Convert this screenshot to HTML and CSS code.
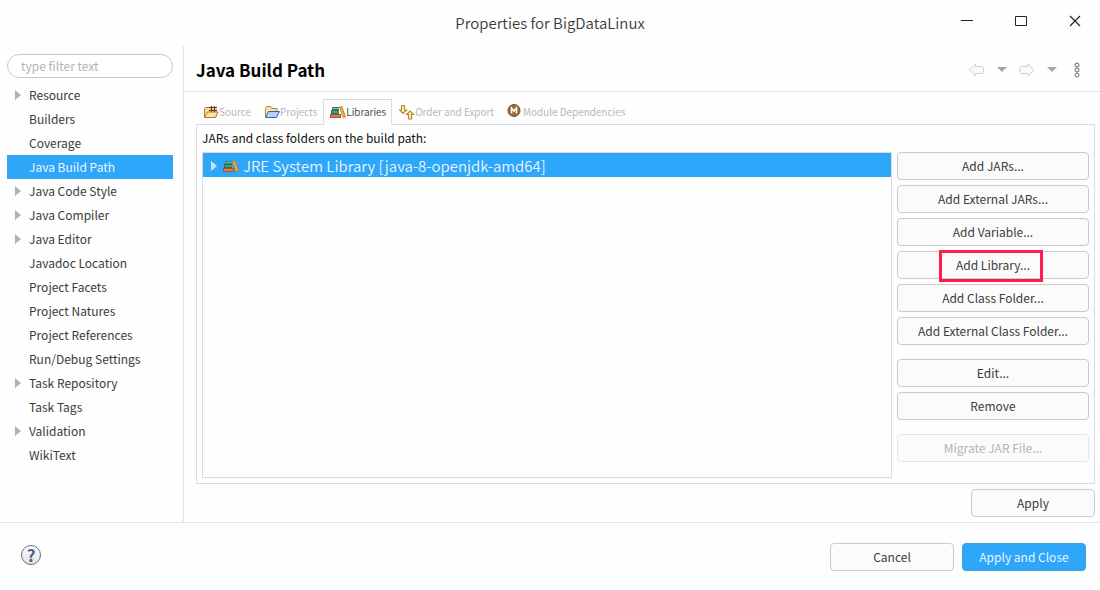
FILE: index.html
```html
<!DOCTYPE html>
<html lang="en">
<head>
  <meta charset="UTF-8">
  <meta name="viewport" content="width=device-width, initial-scale=1.0">
  <title>Properties for BigDataLinux</title>
  <link rel="stylesheet" href="styles.css">
</head>
<body>
<svg class="defs" aria-hidden="true">
  <symbol id="books" viewBox="0 0 16 16">
    <path d="M2 3h7v3H2z" fill="#2f7f78"/>
    <path d="M3 4h6v1H3z" fill="#7cc0a0"/>
    <path d="M1 6h8v4H1z" fill="#2a6a70"/>
    <path d="M2 7h7v2H2z" fill="#46a06a"/>
    <path d="M0 10h11v4H0z" fill="#a8532a"/>
    <path d="M1 11h9v2H1z" fill="#d58149"/>
    <path d="M9 3l3-1 4 11-3 1z" fill="#c07526"/>
    <path d="M10 3.500l1.500-.5 3.500 9.500-1.500.500z" fill="#f6b445"/>
  </symbol>
</svg>

<header class="titlebar">
  <h1>Properties for BigDataLinux</h1>
  <div class="window-controls">
    <button type="button" aria-label="Minimize"><svg width="14" height="14" viewBox="0 0 14 14"><path d="M1 6.500h12" stroke="#222"/></svg></button>
    <button type="button" aria-label="Maximize"><svg width="14" height="14" viewBox="0 0 14 14"><path d="M1.500 2.500h11v9h-11z" fill="none" stroke="#222"/></svg></button>
    <button type="button" aria-label="Close"><svg width="14" height="14" viewBox="0 0 14 14"><path d="M2 2l10 10M12 2L2 12" stroke="#222" stroke-width="1.200"/></svg></button>
  </div>
</header>

<main class="content">
  <nav class="sidebar">
    <input type="text" class="filter" placeholder="type filter text" aria-label="Filter">
    <ul class="tree">
      <li class="parent"><a href="#">Resource</a></li>
      <li><a href="#">Builders</a></li>
      <li><a href="#">Coverage</a></li>
      <li class="selected"><a href="#">Java Build Path</a></li>
      <li class="parent"><a href="#">Java Code Style</a></li>
      <li class="parent"><a href="#">Java Compiler</a></li>
      <li class="parent"><a href="#">Java Editor</a></li>
      <li><a href="#">Javadoc Location</a></li>
      <li><a href="#">Project Facets</a></li>
      <li><a href="#">Project Natures</a></li>
      <li><a href="#">Project References</a></li>
      <li><a href="#">Run/Debug Settings</a></li>
      <li class="parent"><a href="#">Task Repository</a></li>
      <li><a href="#">Task Tags</a></li>
      <li class="parent"><a href="#">Validation</a></li>
      <li><a href="#">WikiText</a></li>
    </ul>
  </nav>

  <section class="page">
    <div class="page-header">
      <h2>Java Build Path</h2>
      <div class="toolbar">
        <button type="button" aria-label="Back"><svg width="16" height="14" viewBox="0 0 16 14"><path d="M.5 7L6.500 1v2.500h7l1 1v5l-1 1h-7V13z" fill="#fafafa" stroke="#cfcfcf"/></svg></button>
        <button type="button" aria-label="Back history"><svg width="10" height="6" viewBox="0 0 10 6"><path d="M0 0h10L5 5z" fill="#a6a6ae"/></svg></button>
        <button type="button" aria-label="Forward"><svg width="16" height="14" viewBox="0 0 16 14"><path d="M15 7L9 1v2.500H2l-1 1v5l1 1h7V13z" fill="#fafafa" stroke="#cfcfcf"/></svg></button>
        <button type="button" aria-label="Forward history"><svg width="10" height="6" viewBox="0 0 10 6"><path d="M0 0h10L5 5z" fill="#a6a6ae"/></svg></button>
        <button type="button" class="menu" aria-label="Menu"><svg width="6" height="16" viewBox="0 0 6 16"><g fill="none" stroke="#666"><circle cx="3" cy="3" r="2"/><circle cx="3" cy="8" r="2"/><circle cx="3" cy="13" r="2"/></g></svg></button>
      </div>
    </div>

    <div class="page-body">
      <div class="tabs" role="tablist">
        <button type="button" role="tab" class="tab">
          <svg width="16" height="16" viewBox="0 0 16 16"><path d="M1.500 13V4.500l1-1h4l1 1H13V13z" fill="#f7dc9a" stroke="#b07b30"/><path d="M6.500 2.500h7v6h-7z" fill="#e9c69b"/><path d="M8.500 2v6M11.500 2v6M6 3.500h8M6 6.500h8" fill="none" stroke="#5f3d26"/><path d="M1.500 13.500l3-5.500h10.500l-2.500 5.500z" fill="#fbe3a6" stroke="#b07b30"/></svg>Source</button>
        <button type="button" role="tab" class="tab">
          <svg width="16" height="16" viewBox="0 0 16 16"><path d="M1.500 13V4.500l1-2h4l1 2h5.500V8" fill="#f9e5a8" stroke="#b0883a"/><path d="M1.500 13.500l3-6h11l-3 6z" fill="#b6d3f7" stroke="#3c5fae"/></svg>Projects</button>
        <button type="button" role="tab" class="tab active" aria-selected="true">
          <svg width="16" height="16"><use href="#books"/></svg>Libraries</button>
        <button type="button" role="tab" class="tab">
          <svg width="16" height="16" viewBox="0 0 16 16"><g fill="#fff3c4" stroke="#b8862b" stroke-width="1.200"><path d="M2.500 1.500h3V6h2L4 9.500.500 6h2z"/><path d="M9.500 15h3v-4.500h2L11 7l-3.500 3.500h2z"/></g></svg>Order and Export</button>
        <button type="button" role="tab" class="tab">
          <svg width="16" height="16" viewBox="0 0 16 16"><circle cx="7" cy="6.500" r="6" fill="#9a6c3c" stroke="#744a24"/><path d="M4.500 9.500V4L7 7l2.500-3v5.500" fill="none" stroke="#fff" stroke-width="1.500"/></svg>Module Dependencies</button>
      </div>

      <div class="panel">
        <p class="caption">JARs and class folders on the build path:</p>
        <div class="columns">
          <ul class="entries">
            <li><svg width="16" height="16"><use href="#books"/></svg>JRE System Library [java-8-openjdk-amd64]</li>
          </ul>
          <div class="actions">
            <button type="button" class="btn">Add JARs...</button>
            <button type="button" class="btn">Add External JARs...</button>
            <button type="button" class="btn">Add Variable...</button>
            <button type="button" class="btn marked">Add Library...</button>
            <button type="button" class="btn">Add Class Folder...</button>
            <button type="button" class="btn">Add External Class Folder...</button>
            <button type="button" class="btn group">Edit...</button>
            <button type="button" class="btn">Remove</button>
            <button type="button" class="btn group" disabled>Migrate JAR File...</button>
          </div>
        </div>
      </div>

      <div class="apply-row">
        <button type="button" class="btn wide">Apply</button>
      </div>
    </div>
  </section>
</main>

<footer class="footer">
  <button type="button" class="help" aria-label="Help">?</button>
  <div class="footer-buttons">
    <button type="button" class="btn wide">Cancel</button>
    <button type="button" class="btn wide primary">Apply and Close</button>
  </div>
</footer>
</body>
</html>
```

FILE: styles.css
```css
*,
*::before,
*::after {
  margin: 0;
  padding: 0;
  box-sizing: border-box;
}

body {
  min-height: 100vh;
  display: flex;
  flex-direction: column;
  font-family: "Noto Sans CJK SC", "Noto Sans", sans-serif;
  font-size: 12px;
  line-height: 20px;
  color: #3b3b3b;
  background: #fefefe;
}

button {
  font: inherit;
  color: inherit;
  background: none;
  border: none;
}

svg {
  display: block;
  flex: none;
}

ul {
  list-style: none;
}

.defs {
  position: absolute;
  width: 0;
  height: 0;
}

/* Title bar */
.titlebar {
  display: grid;
  grid-template-columns: 1fr auto 1fr;
  align-items: center;
  height: 46px;
}

.titlebar h1 {
  grid-column: 2;
  font-size: 15px;
  font-weight: 350;
}

.window-controls {
  display: flex;
  justify-content: flex-end;
  gap: 40px;
  padding: 0 18px 4px 0;
}

/* Layout */
.content {
  flex: 1;
  display: flex;
}

.sidebar {
  width: 184px;
  padding: 8px 10px 0 7px;
  border-right: 1px solid #e4e4e6;
}

.filter {
  width: 100%;
  height: 24px;
  padding: 0 13px 2px;
  font: inherit;
  border: 1px solid #c8c8c8;
  border-radius: 12px;
  background: #fff;
}

.filter::placeholder {
  color: #b4b4b4;
}

.tree {
  margin-top: 5px;
}

.tree li {
  display: flex;
  align-items: center;
  height: 24px;
  padding-left: 22px;
}

.tree a {
  color: inherit;
  text-decoration: none;
}

.tree .parent {
  padding-left: 8px;
}

.tree .parent::before,
.entries li::before {
  content: "";
  margin-right: 8px;
  border: 5px solid transparent;
  border-left: 6px solid #b0b0b6;
  border-right: 0;
}

.tree .selected {
  color: #e8f5ff;
  background: #2ea6fa;
}

/* Page */
.page {
  flex: 1;
  display: flex;
  flex-direction: column;
}

.page-header {
  display: flex;
  align-items: center;
  justify-content: space-between;
  height: 46px;
  padding: 2px 20px 0 12px;
  border-bottom: 1px solid #e4e4e6;
}

.page-header h2 {
  font-size: 17px;
  color: #000;
}

.toolbar {
  display: flex;
  align-items: center;
  gap: 12px;
}

.toolbar .menu {
  margin-left: 5px;
}

.page-body {
  flex: 1;
  display: flex;
  flex-direction: column;
  padding: 7px 5px 5px 12px;
}

.tabs {
  display: flex;
  height: 26px;
}

.tab {
  display: flex;
  align-items: center;
  padding: 0 5px 1px 6px;
  border: 1px solid transparent;
  border-bottom: none;
  font-size: 10px;
  font-weight: 350;
  color: #b0b0b4;
}

.tab.active {
  z-index: 1;
  color: #3b3b3b;
  border-color: #dcdce0;
  background: #fefefe;
}

.panel {
  flex: 1;
  display: flex;
  flex-direction: column;
  margin-top: -1px;
  padding: 5px;
  border: 1px solid #dcdce0;
}

.caption {
  margin-bottom: 6px;
  line-height: 16px;
  color: #111;
}

.columns {
  flex: 1;
  display: flex;
  gap: 5px;
}

.entries {
  flex: 1;
  border: 1px solid #dcdce0;
}

.entries li {
  display: flex;
  align-items: center;
  height: 24px;
  padding: 1px 0 0 8px;
  font-size: 15px;
  font-weight: 350;
  color: #e8f5ff;
  background: #2ea6fa;
}

.entries li::before {
  margin-right: 6px;
  border-left-color: #c4e4fc;
}

.entries svg {
  margin-right: 4px;
}

.actions {
  display: flex;
  flex-direction: column;
  gap: 5px;
  width: 192px;
}

.actions .group {
  margin-top: 9px;
}

/* Buttons */
.btn {
  height: 28px;
  border: 1px solid #cacaca;
  border-radius: 4px;
  background: #fbfbfb;
}

.btn:disabled {
  color: #b4b4b8;
  border-color: #e2e5f0;
}

.btn.wide {
  width: 124px;
}

.btn.primary {
  color: #e8f5ff;
  background: #2ea6fa;
  border-color: #3aa3dd;
}

/* Callout around the button to press */
.marked {
  position: relative;
}

.marked::after {
  content: "";
  position: absolute;
  top: -2px;
  left: 41px;
  width: 104px;
  height: 32px;
  border: 3px solid #fb1f4d;
}

.apply-row {
  display: flex;
  justify-content: flex-end;
  margin-top: 5px;
}

/* Footer */
.footer {
  display: flex;
  align-items: center;
  justify-content: space-between;
  height: 68px;
  padding: 0 14px 0 21px;
  border-top: 1px solid #e4e4e6;
}

.help {
  width: 20px;
  height: 20px;
  margin-bottom: 4px;
  border: 1px solid #5f6f8f;
  border-radius: 50%;
  background: linear-gradient(#fdfdfd, #e2e2e4);
  font-size: 17px;
  font-weight: 700;
  line-height: 18px;
  color: #4b628a;
}

.footer-buttons {
  display: flex;
  gap: 8px;
}
```
